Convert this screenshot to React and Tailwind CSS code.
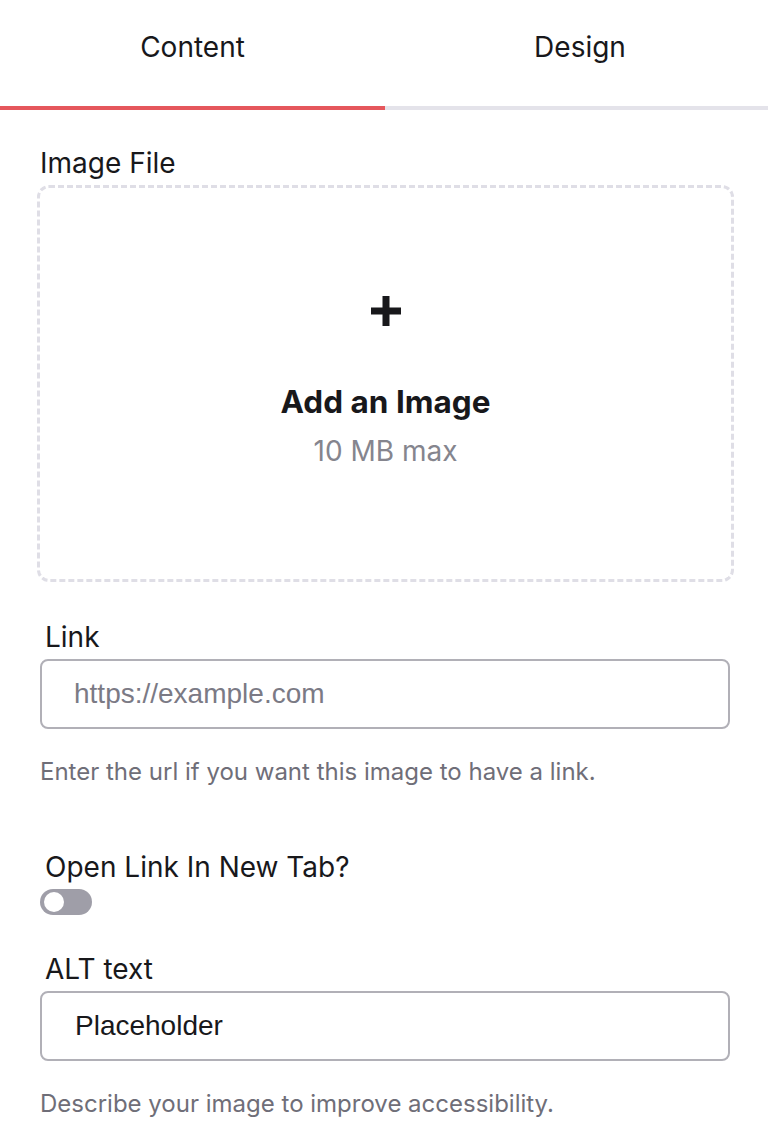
export default function App() {
  const inter = { fontFamily: 'Inter, "Noto Sans", sans-serif' };
  const arial = { fontFamily: '"Liberation Sans", Arial, sans-serif' };
  return (
    <div className="w-full bg-white text-[#18181b] pb-[20px]" style={inter}>
      <div className="flex">
        <div className="w-[385px] h-[110px] border-b-4 border-[#e5575c] flex justify-center pt-[29px]">
          <span className="text-[28px] leading-[36px]">Content</span>
        </div>
        <div className="flex-1 h-[110px] border-b-4 border-[#e4e3ea] flex justify-center pt-[29px] pl-[7px]">
          <span className="text-[28px] leading-[36px]">Design</span>
        </div>
      </div>

      <div className="pl-[40px] mt-[37px] text-[28px] leading-[32px]">Image File</div>
      <div className="ml-[37px] mr-[34px] mt-[6px] h-[397px] border-[3.5px] border-dashed border-[#dfdee6] rounded-[12px] flex flex-col items-center pt-[108px]">
        <svg width="30" height="30" viewBox="0 0 30 30" className="text-[#18181b]">
          <rect x="11.5" y="0" width="7" height="30" fill="currentColor" />
          <rect x="0" y="11.5" width="30" height="7" fill="currentColor" />
        </svg>
        <div className="mt-[56px] text-[31.5px] leading-[40px] font-bold">Add an Image</div>
        <div className="mt-[13px] text-[28px] leading-[32px] text-[#85858e]">10 MB max</div>
      </div>

      <div className="pl-[40px] pr-[38px]">
        <div className="pl-[5px] mt-[39px] text-[28px] leading-[32px]">Link</div>
        <div className="mt-[6px] h-[70px] border-2 border-[#b1b0b7] rounded-[8px] flex items-center pl-[32px]">
          <span className="text-[28px] text-[#7b7a85]" style={arial}>https://example.com</span>
        </div>
        <div className="mt-[28px] text-[24px] leading-[30px] text-[#6f6e78]">
          Enter the url if you want this image to have a link.
        </div>

        <div className="pl-[5px] mt-[64px] text-[28px] leading-[32px]">Open Link In New Tab?</div>
        <div className="mt-[6px] w-[52px] h-[26px] rounded-full bg-[#9f9ea8] flex items-center pl-[4px]">
          <div className="w-[20px] h-[20px] rounded-full bg-white" />
        </div>

        <div className="pl-[5px] mt-[38px] text-[28px] leading-[32px]">ALT text</div>
        <div className="mt-[6px] h-[70px] border-2 border-[#b1b0b7] rounded-[8px] flex items-center pl-[33px]">
          <span className="text-[28px] text-[#18181b]" style={arial}>Placeholder</span>
        </div>
        <div className="mt-[28px] text-[24px] leading-[30px] text-[#6f6e78]">
          Describe your image to improve accessibility.
        </div>
      </div>
    </div>
  );
}
